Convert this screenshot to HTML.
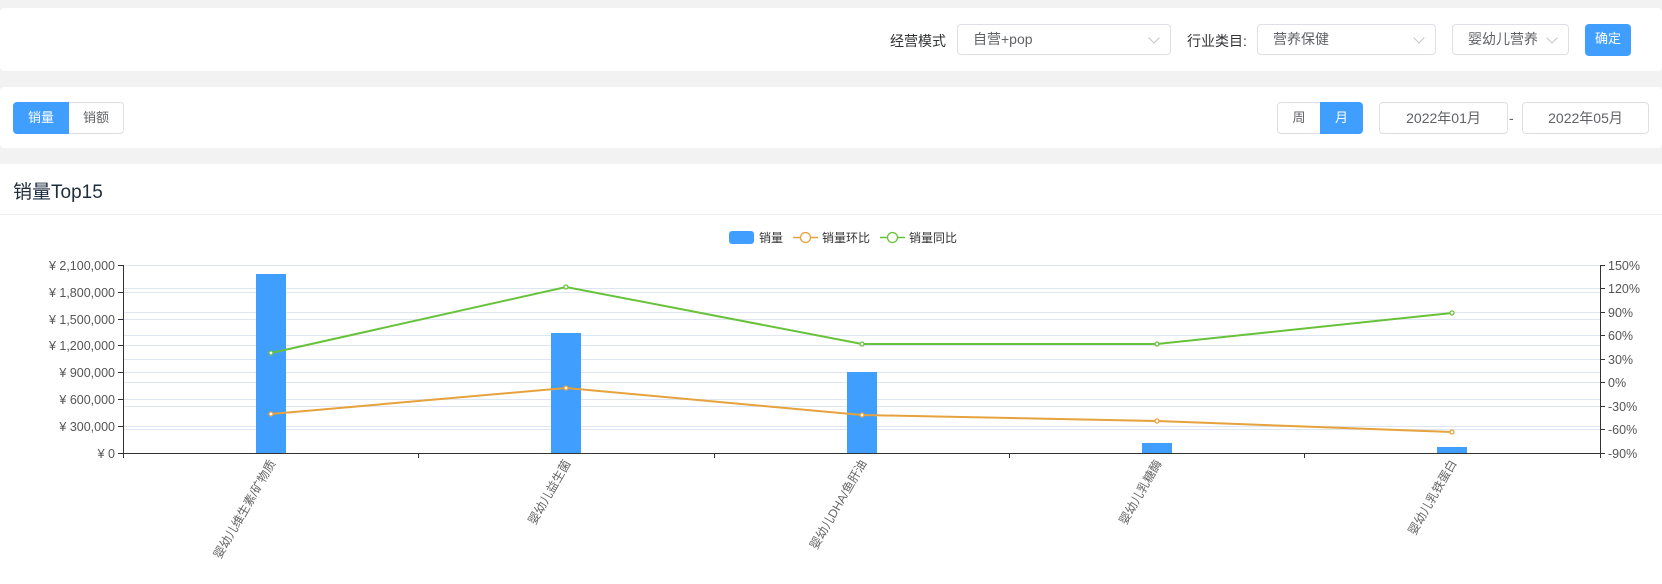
<!DOCTYPE html>
<html><head><meta charset="utf-8"><style>
*{box-sizing:border-box;margin:0;padding:0}
body{width:1662px;height:569px;background:#f2f2f2;font-family:"Liberation Sans","Noto Sans CJK SC",sans-serif;position:relative;overflow:hidden;color:#606266}
.card{position:absolute;left:0;width:1662px;background:#fff;border-radius:4px}
.abs{position:absolute}
.sel{position:absolute;border:1px solid #dcdfe6;border-radius:4px;height:31px;font-size:14px;line-height:29px;padding-left:15px;color:#606266;background:#fff}
.sel i{position:absolute;right:12px;top:9px;width:8px;height:8px;border-right:1px solid #c0c4cc;border-bottom:1px solid #c0c4cc;transform:rotate(45deg)}
.btn{position:absolute;font-size:13px;text-align:center;line-height:30px;height:32px}
</style></head><body>
<div class="card" style="top:8px;height:63px"></div>
<div class="abs" style="left:890px;top:31px;font-size:14px;color:#303133">经营模式</div>
<div class="sel" style="left:957px;top:24px;width:214px">自营+pop<i></i></div>
<div class="abs" style="left:1187px;top:31px;font-size:14px;color:#303133">行业类目:</div>
<div class="sel" style="left:1257px;top:24px;width:179px">营养保健<i></i></div>
<div class="sel" style="left:1452px;top:24px;width:117px">婴幼儿营养<i></i></div>
<div class="btn" style="left:1585px;top:24px;width:46px;background:#409eff;color:#fff;border-radius:4px">确定</div>

<div class="card" style="top:87px;height:61px"></div>
<div class="btn" style="left:13px;top:102px;width:56px;background:#409eff;color:#fff;border-radius:4px 0 0 4px;border:1px solid #409eff">销量</div>
<div class="btn" style="left:69px;top:102px;width:55px;border:1px solid #dcdfe6;border-left:none;border-radius:0 4px 4px 0;color:#606266">销额</div>
<div class="btn" style="left:1277px;top:102px;width:44px;border:1px solid #dcdfe6;border-radius:4px 0 0 4px;color:#606266">周</div>
<div class="btn" style="left:1320px;top:102px;width:43px;background:#409eff;color:#fff;border-radius:0 4px 4px 0;border:1px solid #409eff">月</div>
<div class="sel" style="left:1379px;top:102px;width:129px;height:32px;text-align:center;padding:0;line-height:30px">2022年01月</div>
<div class="abs" style="left:1509px;top:110px;font-size:14px">-</div>
<div class="sel" style="left:1522px;top:102px;width:127px;height:32px;text-align:center;padding:0;line-height:30px">2022年05月</div>

<div class="card" style="top:164px;height:420px;border-radius:0"></div>
<div class="abs" style="left:13px;top:177px;font-size:19px;color:#1f2d3d">销量Top15</div>
<div class="abs" style="left:0;top:214px;width:1662px;height:1px;background:#ebeef5"></div>

<svg class="abs" style="left:0;top:0" width="1662" height="569" font-family="Liberation Sans, Noto Sans CJK SC, sans-serif">
<rect x="729" y="231" width="25" height="13" rx="3" fill="#409eff"/>
<text x="759" y="242" font-size="12" fill="#333">销量</text>
<line x1="793" y1="237.5" x2="818" y2="237.5" stroke="#e6a23c" stroke-width="1.5"/><circle cx="805.5" cy="237.5" r="5" fill="#fff" stroke="#e6a23c" stroke-width="1.3"/>
<text x="822" y="242" font-size="12" fill="#333">销量环比</text>
<line x1="880" y1="237.5" x2="905" y2="237.5" stroke="#67c23a" stroke-width="1.5"/><circle cx="892.5" cy="237.5" r="5" fill="#fff" stroke="#67c23a" stroke-width="1.3"/>
<text x="909" y="242" font-size="12" fill="#333">销量同比</text>
<g stroke="#e0e6f1" stroke-width="1">
<line x1="123" x2="1600" y1="265.5" y2="265.5"/><line x1="123" x2="1600" y1="292.5" y2="292.5"/><line x1="123" x2="1600" y1="319.5" y2="319.5"/><line x1="123" x2="1600" y1="345.5" y2="345.5"/><line x1="123" x2="1600" y1="372.5" y2="372.5"/><line x1="123" x2="1600" y1="399.5" y2="399.5"/><line x1="123" x2="1600" y1="426.5" y2="426.5"/>
<line x1="123" x2="1600" y1="288.5" y2="288.5"/><line x1="123" x2="1600" y1="312.5" y2="312.5"/><line x1="123" x2="1600" y1="335.5" y2="335.5"/><line x1="123" x2="1600" y1="359.5" y2="359.5"/><line x1="123" x2="1600" y1="382.5" y2="382.5"/><line x1="123" x2="1600" y1="406.5" y2="406.5"/><line x1="123" x2="1600" y1="429.5" y2="429.5"/>
</g>
<g fill="#409eff">
<rect x="256" y="274" width="30" height="179"/><rect x="551" y="333" width="30" height="120"/><rect x="847" y="372" width="30" height="81"/><rect x="1142" y="443" width="30" height="10"/><rect x="1437" y="447" width="30" height="6"/>
</g>
<g stroke="#333" stroke-width="1" fill="none">
<line x1="123.5" y1="265" x2="123.5" y2="453"/><line x1="123" y1="453.5" x2="1600" y2="453.5"/><line x1="1600.5" y1="265" x2="1600.5" y2="453"/>
<path d="M118 265.5h5M118 292.5h5M118 319.5h5M118 345.5h5M118 372.5h5M118 399.5h5M118 426.5h5M118 453.5h5"/>
<path d="M1600 265.5h5M1600 288.5h5M1600 312.5h5M1600 335.5h5M1600 359.5h5M1600 382.5h5M1600 406.5h5M1600 429.5h5M1600 453.5h5"/>
<path d="M123.5 453v5M418.5 453v5M714.5 453v5M1009.5 453v5M1304.5 453v5M1600.5 453v5"/>
</g>
<g font-size="12.5" fill="#555" text-anchor="end">
<text x="115" y="270">¥ 2,100,000</text><text x="115" y="297">¥ 1,800,000</text><text x="115" y="324">¥ 1,500,000</text><text x="115" y="350">¥ 1,200,000</text><text x="115" y="377">¥ 900,000</text><text x="115" y="404">¥ 600,000</text><text x="115" y="431">¥ 300,000</text><text x="115" y="458">¥ 0</text>
</g>
<g font-size="12.5" fill="#555">
<text x="1608" y="270">150%</text><text x="1608" y="293">120%</text><text x="1608" y="317">90%</text><text x="1608" y="340">60%</text><text x="1608" y="364">30%</text><text x="1608" y="387">0%</text><text x="1608" y="411">-30%</text><text x="1608" y="434">-60%</text><text x="1608" y="458">-90%</text>
</g>
<polyline points="271,353 566,287 862,344 1157,344 1452,313" fill="none" stroke="#67c23a" stroke-width="2"/>
<polyline points="271,414 566,388 862,415 1157,421 1452,432" fill="none" stroke="#e6a23c" stroke-width="2"/>
<g fill="#fff" stroke-width="1.3">
<circle cx="271" cy="353" r="2" stroke="#67c23a"/><circle cx="566" cy="287" r="2" stroke="#67c23a"/><circle cx="862" cy="344" r="2" stroke="#67c23a"/><circle cx="1157" cy="344" r="2" stroke="#67c23a"/><circle cx="1452" cy="313" r="2" stroke="#67c23a"/>
<circle cx="271" cy="414" r="2" stroke="#e6a23c"/><circle cx="566" cy="388" r="2" stroke="#e6a23c"/><circle cx="862" cy="415" r="2" stroke="#e6a23c"/><circle cx="1157" cy="421" r="2" stroke="#e6a23c"/><circle cx="1452" cy="432" r="2" stroke="#e6a23c"/>
</g>
<g font-size="12" fill="#666" text-anchor="end">
<text transform="translate(276,463) rotate(-60)">婴幼儿维生素/矿物质</text>
<text transform="translate(571,463) rotate(-60)">婴幼儿益生菌</text>
<text transform="translate(867,463) rotate(-60)">婴幼儿DHA/鱼肝油</text>
<text transform="translate(1162,463) rotate(-60)">婴幼儿乳糖酶</text>
<text transform="translate(1457,463) rotate(-60)">婴幼儿乳铁蛋白</text>
</g>
</svg>
</body></html>
